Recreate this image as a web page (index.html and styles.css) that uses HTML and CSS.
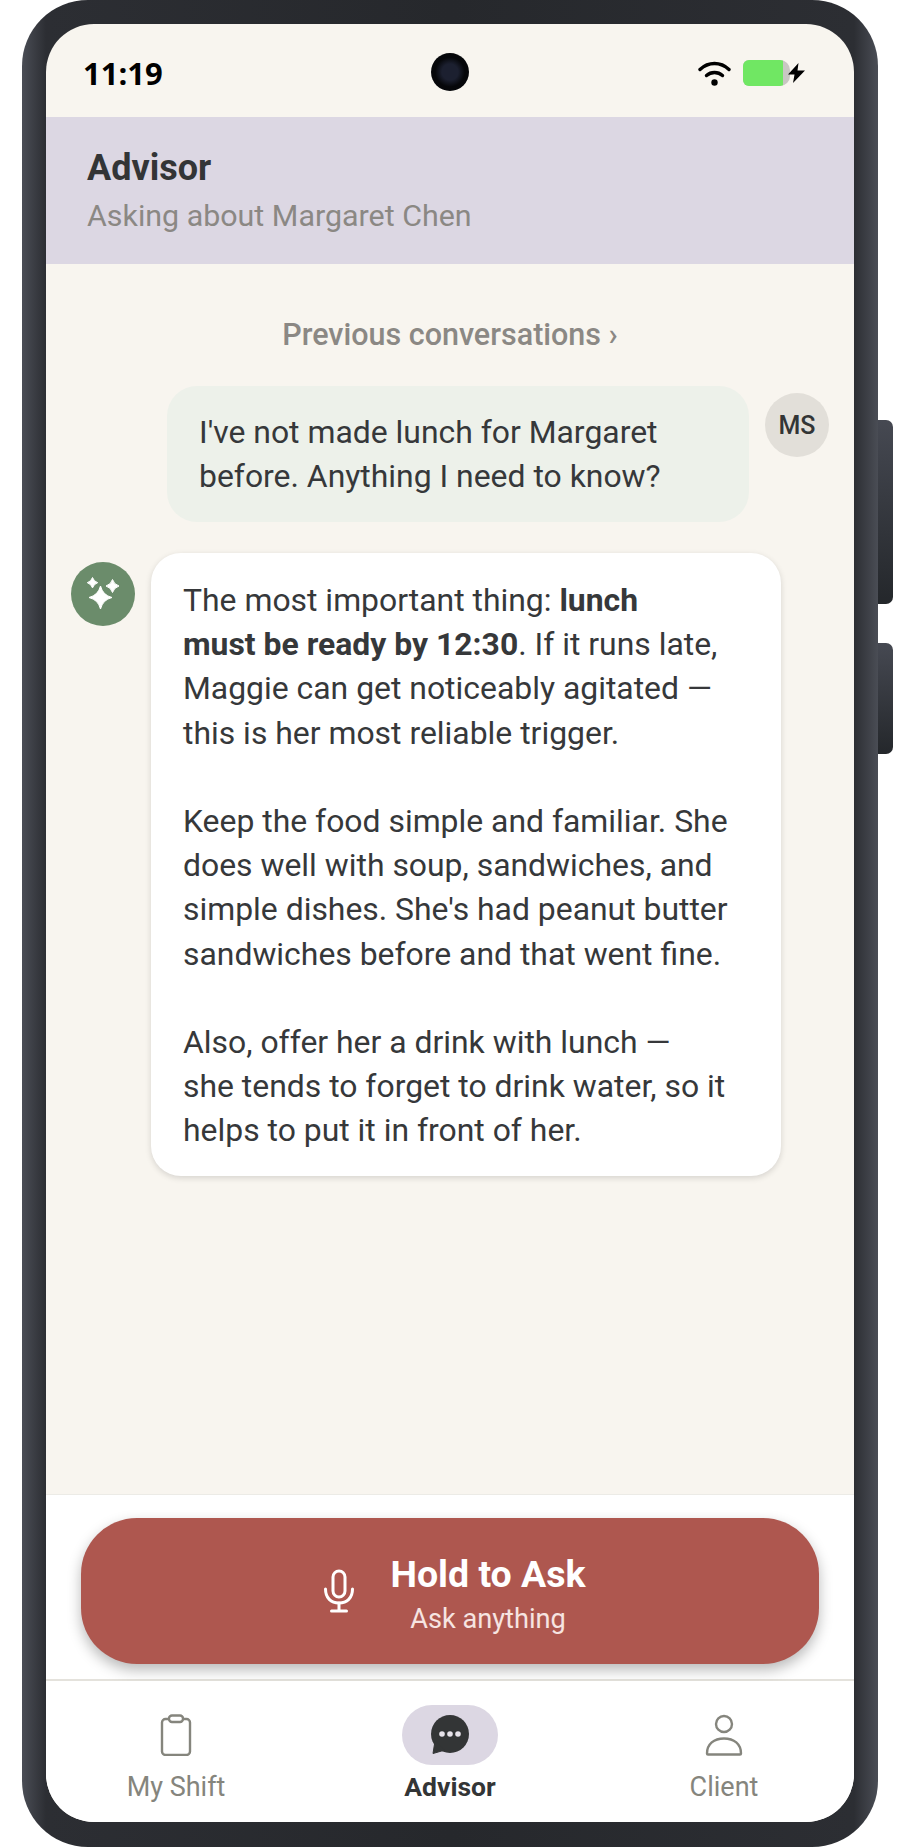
FILE: index.html
```html
<!DOCTYPE html>
<html>
<head>
  <title>Advisor</title>
  <link rel="stylesheet" href="styles.css">
</head>
<body>
  <div class="phone">
    <div class="side-btn side-btn-top"></div>
    <div class="side-btn side-btn-bottom"></div>
    <div class="screen">
      <div class="camera"></div>

      <div class="status-bar">
        <span class="time">11:19</span>
        <div class="status-icons">
          <svg class="wifi" width="33" height="26" viewBox="0 0 33 26">
            <path d="M2 9.5C10.5 1.5 22.5 1.5 31 9.5" fill="none" stroke="#000" stroke-width="3.4" stroke-linecap="round"/>
            <path d="M8.5 15.5C13 11.5 20 11.5 24.5 15.5" fill="none" stroke="#000" stroke-width="3.4" stroke-linecap="round"/>
            <circle cx="16.5" cy="22.5" r="3.2" fill="#000"/>
          </svg>
          <div class="battery"><div class="battery-fill"></div></div>
          <svg class="bolt" width="17" height="20" viewBox="0 0 17 20">
            <path d="M10.5 0L0 11.5H6.5L5 20L17 7.5H9.5Z" fill="#000"/>
          </svg>
        </div>
      </div>

      <div class="header">
        <h1>Advisor</h1>
        <p>Asking about Margaret Chen</p>
      </div>

      <div class="chat">
        <div class="previous">Previous conversations ›</div>

        <div class="user-row">
          <div class="bubble user-bubble">I've not made lunch for Margaret<br>before. Anything I need to know?</div>
          <div class="avatar user-avatar">MS</div>
        </div>

        <div class="ai-row">
          <div class="avatar ai-avatar">
            <svg width="64" height="64" viewBox="0 0 64 64" fill="#fff" stroke="#fff" stroke-width="1" stroke-linejoin="round">
              <path d="M29.5 24Q31.8 33.2 41 35.5Q31.8 37.8 29.5 47Q27.2 37.8 18 35.5Q27.2 33.2 29.5 24Z"/>
              <path d="M21.5 15.5Q22.8 19.4 26.7 20.7Q22.8 22 21.5 25.9Q20.2 22 16.3 20.7Q20.2 19.4 21.5 15.5Z"/>
              <path d="M41.5 17.5Q43 22.5 48 24Q43 25.5 41.5 30.5Q40 25.5 35 24Q40 22.5 41.5 17.5Z"/>
            </svg>
          </div>
          <div class="bubble ai-bubble">
            <p>The most important thing: <b>lunch<br>must be ready by 12:30</b>. If it runs late,<br>Maggie can get noticeably agitated —<br>this is her most reliable trigger.</p>
            <p>Keep the food simple and familiar. She<br>does well with soup, sandwiches, and<br>simple dishes. She's had peanut butter<br>sandwiches before and that went fine.</p>
            <p>Also, offer her a drink with lunch —<br>she tends to forget to drink water, so it<br>helps to put it in front of her.</p>
          </div>
        </div>
      </div>

      <div class="ask-bar">
        <button class="ask-btn">
          <svg width="34" height="44" viewBox="0 0 34 44" fill="none" stroke="#fff" stroke-width="3" stroke-linecap="round">
            <rect x="11" y="2" width="12" height="26" rx="6"/>
            <path d="M3.5 20C3.5 29 9 34 17 34C25 34 30.5 29 30.5 20"/>
            <path d="M17 34V41"/>
            <path d="M9.5 42H24.5"/>
          </svg>
          <span class="ask-text">
            <span class="ask-title">Hold to Ask</span>
            <span class="ask-sub">Ask anything</span>
          </span>
        </button>
      </div>

      <div class="nav">
        <div class="nav-item">
          <div class="nav-icon">
            <svg width="32" height="42" viewBox="0 0 32 42" fill="none" stroke="#85857d" stroke-width="2.4">
              <rect x="2" y="5" width="28" height="36" rx="3.5"/>
              <rect x="9" y="1.5" width="14" height="6.5" rx="3" fill="#fff"/>
            </svg>
          </div>
          <span>My Shift</span>
        </div>
        <div class="nav-item active">
          <div class="nav-icon nav-pill">
            <svg width="40" height="40" viewBox="0 0 40 40">
              <circle cx="20" cy="19" r="19" fill="#333536"/>
              <path d="M5 26L3 38.5L15 35Z" fill="#333536" stroke="#333536" stroke-width="1" stroke-linejoin="round"/>
              <circle cx="12" cy="19" r="2.8" fill="#e6e2ea"/>
              <circle cx="20" cy="19" r="2.8" fill="#e6e2ea"/>
              <circle cx="28" cy="19" r="2.8" fill="#e6e2ea"/>
            </svg>
          </div>
          <span>Advisor</span>
        </div>
        <div class="nav-item">
          <div class="nav-icon">
            <svg width="38" height="42" viewBox="0 0 38 42" fill="none" stroke="#85857d" stroke-width="2.4">
              <circle cx="19" cy="10" r="8"/>
              <path d="M2 39.5C2 30 9 24.5 19 24.5C29 24.5 36 30 36 39.5C36 40 35.5 40.5 35 40.5H3C2.5 40.5 2 40 2 39.5Z"/>
            </svg>
          </div>
          <span>Client</span>
        </div>
      </div>
    </div>
  </div>
</body>
</html>
```

FILE: styles.css
```css
* {
  box-sizing: border-box;
}

body {
  margin: 0;
  background-color: #fff;
  font-family: Roboto, "Liberation Sans", sans-serif;
}

.phone {
  position: relative;
  width: 856px;
  height: 1847px;
  margin-left: 22px;
  padding: 24px;
  border-radius: 66px;
  background: linear-gradient(to right, #4a4d55 0, #2c2e33 24px, #26282c 50%, #2c2e33 832px, #4a4d55 100%);
}

.side-btn {
  position: absolute;
  left: 856px;
  width: 15px;
  border-radius: 0 7px 7px 0;
  background: linear-gradient(to bottom, #464952, #24272b);
}

.side-btn-top {
  top: 420px;
  height: 184px;
}

.side-btn-bottom {
  top: 643px;
  height: 111px;
}

.screen {
  position: relative;
  display: flex;
  flex-direction: column;
  height: 1798px;
  border-radius: 48px;
  overflow: hidden;
  background-color: #f8f5ef;
}

.camera {
  position: absolute;
  top: 29px;
  left: 385px;
  width: 38px;
  height: 38px;
  border-radius: 50%;
  background: radial-gradient(circle, #1c2030 0, #1c2030 30%, #06070a 55%);
}

.status-bar {
  display: flex;
  justify-content: space-between;
  align-items: center;
  height: 93px;
  padding: 4px 49px 0 37px;
}

.time {
  font-family: "Open Sans", sans-serif;
  font-size: 31px;
  font-weight: 700;
  color: #000;
}

.status-icons {
  display: flex;
  align-items: center;
}

.battery {
  width: 47px;
  height: 26px;
  margin-left: 12px;
  border-radius: 6px 10px 10px 6px;
  overflow: hidden;
  background-color: #c9c7c3;
}

.battery-fill {
  width: 40px;
  height: 100%;
  background-color: #70e763;
}

.bolt {
  margin-left: -2px;
}

.header {
  height: 147px;
  padding: 31px 41px 0;
  background-color: #dcd7e3;
}

.header h1 {
  margin: 0;
  font-size: 36px;
  font-weight: 700;
  line-height: 40px;
  color: #333536;
}

.header p {
  margin: 11px 0 0;
  font-size: 30.4px;
  line-height: 34px;
  color: #8b8884;
}

.chat {
  flex: 1;
  padding: 0 25px;
}

.previous {
  margin-top: 54px;
  font-size: 30.5px;
  font-weight: 500;
  line-height: 34px;
  text-align: center;
  color: #8b8884;
}

.bubble {
  font-size: 31.9px;
  line-height: 44.2px;
  color: #36383a;
}

.user-row {
  display: flex;
  justify-content: flex-end;
  align-items: flex-start;
  gap: 16px;
  margin-top: 34px;
}

.user-bubble {
  width: 582px;
  height: 136px;
  padding: 24px 32px;
  border-radius: 30px;
  background-color: #edf1ea;
}

.avatar {
  display: flex;
  justify-content: center;
  align-items: center;
  flex-shrink: 0;
  width: 64px;
  height: 64px;
  border-radius: 50%;
}

.user-avatar {
  margin-top: 7px;
  background-color: #e2dfd9;
  font-size: 25px;
  font-weight: 500;
  color: #333536;
}

.ai-row {
  display: flex;
  align-items: flex-start;
  gap: 16px;
  margin-top: 31px;
}

.ai-avatar {
  margin-top: 9px;
  background-color: #6b8c6b;
}

.ai-bubble {
  width: 630px;
  padding: 25px 32px 23px;
  border-radius: 30px;
  background-color: #fff;
  box-shadow: 0 2px 6px rgba(0, 0, 0, 0.14);
}

.ai-bubble p {
  margin: 0 0 44.2px;
}

.ai-bubble p:last-child {
  margin-bottom: 0;
}

.ask-bar {
  height: 187px;
  padding: 23px 35px 0;
  background-color: #fff;
  border-top: 1px solid #ecebe6;
  border-bottom: 2px solid #e4e2dc;
}

.ask-btn {
  display: flex;
  justify-content: center;
  align-items: center;
  gap: 34px;
  width: 100%;
  height: 146px;
  padding: 0 0 0 8px;
  border: none;
  border-radius: 56px;
  background-color: #ae574f;
  box-shadow: 0 6px 14px rgba(0, 0, 0, 0.28);
  font-family: inherit;
  color: #fff;
}

.ask-text {
  display: flex;
  flex-direction: column;
  align-items: center;
  padding-top: 4px;
}

.ask-title {
  font-size: 37.5px;
  font-weight: 700;
  line-height: 44px;
}

.ask-sub {
  margin-top: 7px;
  font-size: 27.2px;
  line-height: 32px;
  color: #f6e4e1;
}

.nav {
  display: flex;
  justify-content: space-between;
  height: 141px;
  padding: 24px 0 0;
  background-color: #fff;
}

.nav-item {
  display: flex;
  flex-direction: column;
  align-items: center;
  width: 260px;
  font-size: 27px;
  color: #85857d;
}

.nav-item.active {
  font-size: 26.5px;
  font-weight: 700;
  color: #333536;
}

.nav-icon {
  display: flex;
  justify-content: center;
  align-items: center;
  width: 96px;
  height: 60px;
  margin-bottom: 6px;
}

.nav-pill {
  border-radius: 30px;
  background-color: #dcd7e3;
}
```
